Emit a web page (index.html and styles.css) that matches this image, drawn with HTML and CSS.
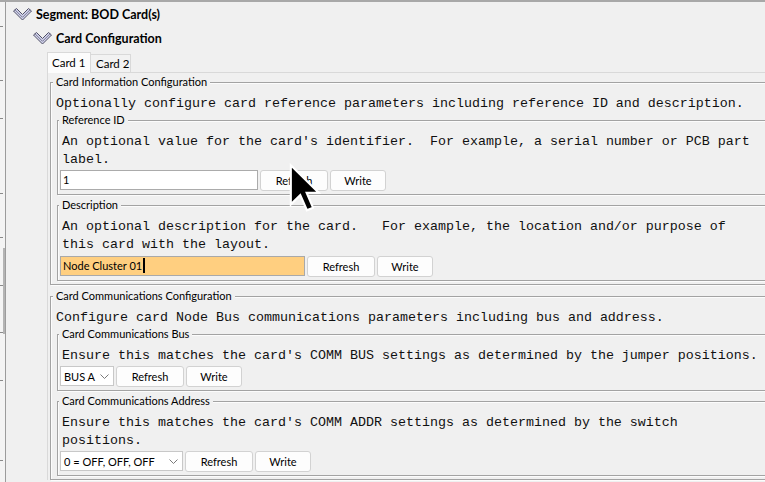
FILE: index.html
```html
<!DOCTYPE html>
<html lang="en">
<head>
<meta charset="utf-8">
<title>Segment: BOD Card(s)</title>
<link rel="stylesheet" href="styles.css">
</head>
<body>
<div class="app">
  <div class="strip"></div>
  <div class="main">
    <div class="node">
      <svg class="chev" viewBox="0 0 19 13" width="19" height="13" aria-hidden="true">
        <path d="M0.5 3 L3.5 0.5 L9.5 6.5 L15.5 0.5 L18.5 3 L9.5 12 Z" fill="#d2d3ec" stroke="#505066" stroke-width="1" stroke-linejoin="round"/>
        <path d="M2 1.8 L9.5 9.3 L17 1.8" fill="none" stroke="#6e6e88" stroke-width="0.9"/>
      </svg>
      <span>Segment: BOD Card(s)</span>
    </div>
    <div class="node lvl2">
      <svg class="chev" viewBox="0 0 19 13" width="19" height="13" aria-hidden="true">
        <path d="M0.5 3 L3.5 0.5 L9.5 6.5 L15.5 0.5 L18.5 3 L9.5 12 Z" fill="#d2d3ec" stroke="#505066" stroke-width="1" stroke-linejoin="round"/>
        <path d="M2 1.8 L9.5 9.3 L17 1.8" fill="none" stroke="#6e6e88" stroke-width="0.9"/>
      </svg>
      <span>Card Configuration</span>
    </div>

    <div class="tabs-area">
      <div class="tabs">
        <div class="tab active">Card 1</div>
        <div class="tab second">Card 2</div>
      </div>
      <div class="panel">
        <fieldset class="group outer">
          <legend>Card Information Configuration</legend>
          <p class="mono">Optionally configure card reference parameters including reference ID and description.</p>

          <fieldset class="group inner">
            <legend>Reference ID</legend>
            <p class="mono">An optional value for the card's identifier.  For example, a serial number or PCB part
label.</p>
            <div class="row">
              <div class="field w-ref">1</div>
              <button class="btn refresh">Refresh</button>
              <button class="btn write">Write</button>
            </div>
          </fieldset>

          <fieldset class="group inner">
            <legend>Description</legend>
            <p class="mono">An optional description for the card.   For example, the location and/or purpose of
this card with the layout.</p>
            <div class="row gap3">
              <div class="field w-desc edited">Node Cluster 01<span class="caret"></span></div>
              <button class="btn refresh">Refresh</button>
              <button class="btn write">Write</button>
            </div>
          </fieldset>
        </fieldset>

        <fieldset class="group outer second-group">
          <legend>Card Communications Configuration</legend>
          <p class="mono">Configure card Node Bus communications parameters including bus and address.</p>

          <fieldset class="group inner">
            <legend>Card Communications Bus</legend>
            <p class="mono">Ensure this matches the card's COMM BUS settings as determined by the jumper positions.</p>
            <div class="row">
              <div class="combo w-bus"><span>BUS A</span>
                <svg viewBox="0 0 9 5" width="9" height="5" aria-hidden="true"><path d="M0.5 0.5 L4.5 4.5 L8.5 0.5" fill="none" stroke="#7a7a7a" stroke-width="1"/></svg>
              </div>
              <button class="btn refresh r-sm">Refresh</button>
              <button class="btn write">Write</button>
            </div>
          </fieldset>

          <fieldset class="group inner">
            <legend>Card Communications Address</legend>
            <p class="mono">Ensure this matches the card's COMM ADDR settings as determined by the switch
positions.</p>
            <div class="row">
              <div class="combo w-addr"><span>0 = OFF, OFF, OFF</span>
                <svg viewBox="0 0 9 5" width="9" height="5" aria-hidden="true"><path d="M0.5 0.5 L4.5 4.5 L8.5 0.5" fill="none" stroke="#7a7a7a" stroke-width="1"/></svg>
              </div>
              <button class="btn refresh r-sm">Refresh</button>
              <button class="btn write">Write</button>
            </div>
          </fieldset>
        </fieldset>
      </div>
    </div>
  </div>
</div>

<svg class="cursor" viewBox="-1 -1 14 22" width="34" height="52" aria-hidden="true">
  <path d="M0 0 L0 16.5 L4 12.6 L6.8 19 L9.4 17.9 L6.7 11.6 L11.8 11.6 Z" fill="#000" stroke="#fff" stroke-width="0.9" stroke-linejoin="miter"/>
</svg>
</body>
</html>
```

FILE: styles.css
```css
html, body {
  margin: 0;
  height: 100%;
  overflow: hidden;
  background: #f0f0f0;
}

body {
  font-family: Lato, "Liberation Sans", sans-serif;
  font-size: 11px;
  color: #000;
}

.app {
  display: flex;
  width: 830px;
  height: 482px;
  box-sizing: border-box;
  border-top: 2px solid #a8a8a8;
}

.strip {
  flex: none;
  width: 5px;
  border-right: 1px solid #9c9c9c;
  background-color: #f4f4f4;
  background-image:
    linear-gradient(#8a8a8a, #8a8a8a),
    linear-gradient(#8a8a8a, #8a8a8a),
    linear-gradient(#8a8a8a, #8a8a8a),
    linear-gradient(#8a8a8a, #8a8a8a),
    linear-gradient(#8a8a8a, #8a8a8a),
    linear-gradient(#8a8a8a, #8a8a8a),
    linear-gradient(#8a8a8a, #8a8a8a),
    linear-gradient(#8a8a8a, #8a8a8a),
    linear-gradient(#8a8a8a, #8a8a8a),
    linear-gradient(#b4b4b4, #b4b4b4);
  background-repeat: no-repeat;
  background-size: 3px 1px, 3px 1px, 3px 1px, 3px 1px, 3px 1px, 3px 1px, 3px 1px, 3px 1px, 3px 1px, 2px 86px;
  background-position:
    0 24px, 0 78px, 0 116px, 0 191px, 0 235px, 0 283px, 0 330px, 0 378px, 0 458px, 3px 246px;
}

.main {
  flex: 1;
  padding-left: 7px;
  min-width: 0;
}

.node {
  display: flex;
  align-items: center;
  gap: 4px;
  height: 24px;
  font-weight: bold;
  font-size: 12.5px;
}

.chev {
  flex: none;
  display: block;
}

.lvl2 {
  padding-left: 20px;
}

.tabs-area {
  margin: 2px 0 0 34px;
}

.tabs {
  display: flex;
  align-items: flex-end;
  height: 20px;
}

.tab {
  box-sizing: border-box;
  height: 18px;
  line-height: 17px;
  border: 1px solid #d9d9d9;
  border-bottom: none;
  background: #f2f2f2;
  white-space: nowrap;
  font-size: 11.5px;
}

.tab.active {
  position: relative;
  z-index: 1;
  width: 44px;
  height: 21px;
  margin-bottom: -1px;
  padding-left: 4px;
  line-height: 19px;
  background: #fcfcfc;
}

.tab.second {
  width: 41px;
  margin-left: -1px;
  padding-left: 5px;
}

.panel {
  border-top: 1px solid #d9d9d9;
  border-left: 1px solid #d9d9d9;
  padding: 2px 0 0 2px;
}

.group {
  margin: 0;
  min-width: 0;
  padding: 5px 0 3px 2px;
  border: 1px solid #a3a3a3;
  box-shadow: inset 1px 1px 0 #fcfcfc, 1px 1px 0 #fcfcfc;
}

.group > legend {
  padding: 0 3px;
  font-size: 11px;
  line-height: 14px;
  background: #f0f0f0;
}

.inner > legend {
  margin-left: -1px;
}

.outer > .mono {
  padding-left: 3px;
}

.inner > .mono {
  padding-left: 2px;
}

.second-group {
  margin-top: 4px;
}

.inner {
  margin: 0 0 0 4px;
}

.inner + .inner {
  margin-top: 3px;
}

.mono {
  margin: 0;
  padding-top: 1px;
  font-family: "Liberation Mono", "DejaVu Sans Mono", monospace;
  font-size: 13.33px;
  line-height: 18px;
  white-space: pre;
  color: #101010;
}

.row {
  display: flex;
  align-items: flex-start;
  gap: 2px;
  height: 21px;
  margin-top: 1px;
}

.row.gap3 {
  margin-top: 2px;
}

.field {
  box-sizing: border-box;
  height: 20px;
  padding-left: 2px;
  line-height: 18px;
  border: 1px solid #ababab;
  background: #fff;
  white-space: nowrap;
}

.w-ref { width: 198px; }
.w-desc { width: 245px; }

.field.edited {
  background: #ffcf80;
  border-color: #a9a9a9;
}

.caret {
  display: inline-block;
  width: 2px;
  height: 15px;
  margin-left: 1px;
  vertical-align: -3px;
  background: #000;
}

.btn {
  box-sizing: border-box;
  height: 21px;
  margin: 0;
  padding: 0;
  font: inherit;
  color: #000;
  border: 1px solid #d2d2d2;
  border-radius: 3px;
  background: #fdfdfd;
  text-align: center;
  line-height: 19px;
}

.refresh { width: 68px; }
.write { width: 56px; }

.combo {
  box-sizing: border-box;
  display: flex;
  align-items: center;
  justify-content: space-between;
  height: 20px;
  padding: 0 4px 0 3px;
  border: 1px solid #c8c8c8;
  background: #fff;
  white-space: nowrap;
}

.w-bus { width: 54px; }
.w-addr { width: 123px; }

.cursor {
  position: absolute;
  left: 288px;
  top: 163px;
  display: block;
}
```
